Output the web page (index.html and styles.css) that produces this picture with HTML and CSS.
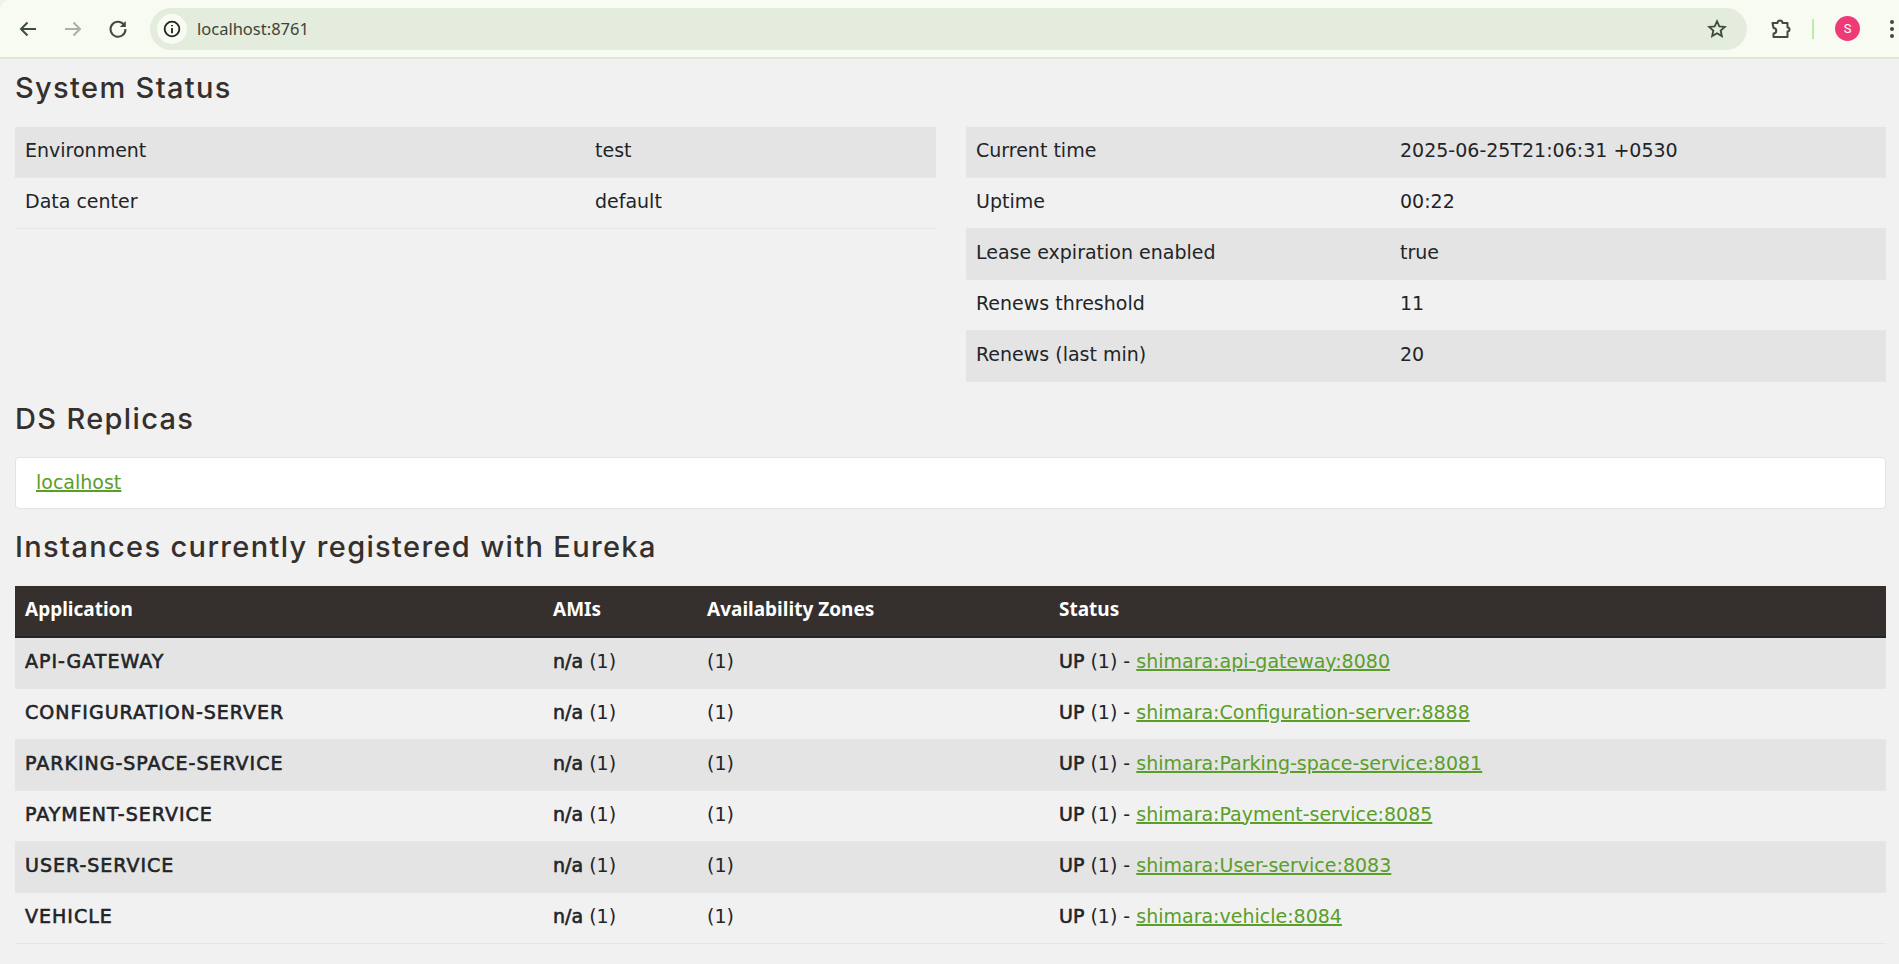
FILE: index.html
```html
<!DOCTYPE html>
<html lang="en">
<head>
<meta charset="utf-8">
<title>Eureka</title>
<link rel="stylesheet" href="styles.css">
</head>
<body>
<header class="toolbar">
  <svg class="ic nav-back" viewBox="0 0 24 24"><path d="M20 12H5M11.500 5.500 5 12l6.500 6.500"/></svg>
  <svg class="ic nav-fwd" viewBox="0 0 24 24"><path d="M4 12h15M12.500 5.500 19 12l-6.500 6.500"/></svg>
  <svg class="ic nav-reload" viewBox="0 0 24 24"><path d="M18.500 8.500A7.500 7.500 0 1 0 19.500 12"/><path class="solid" d="M19.800 4v6h-6z"/></svg>
  <div class="omnibox">
    <span class="site-chip"><svg class="info" viewBox="0 0 24 24"><circle cx="12" cy="12" r="8"/><path d="M12 11v5.500M12 7.500v1.500"/></svg></span>
    <span class="url">localhost:8761</span>
    <svg class="ic star" viewBox="0 0 24 24"><path d="m12 3.500 2.500 5.600 6 .6-4.500 4 1.300 6-5.300-3.100-5.300 3.100 1.300-6-4.500-4 6-.6z"/></svg>
  </div>
  <svg class="ic ext" viewBox="0 0 24 24"><path d="M4.500 6H9.500a2.500 2.500 0 0 1 5 0H19.500v4.500a2 2 0 0 1 0 4V20H5.500v-3.500a2.600 2.600 0 0 0 0-5.500z" stroke-linejoin="round"/></svg>
  <span class="divider"></span>
  <span class="avatar">S</span>
  <span class="dots"><i></i><i></i><i></i></span>
</header>

<main class="page">
  <h1 class="title title-sys">System Status</h1>
  <section class="status-grid">
    <table class="tbl tbl-left">
      <tr><td class="c-a">Environment</td><td>test</td></tr>
      <tr><td class="c-a">Data center</td><td>default</td></tr>
    </table>
    <table class="tbl tbl-right">
      <tr><td class="c-b">Current time</td><td>2025-06-25T21:06:31 +0530</td></tr>
      <tr><td class="c-b">Uptime</td><td>00:22</td></tr>
      <tr><td class="c-b">Lease expiration enabled</td><td>true</td></tr>
      <tr><td class="c-b">Renews threshold</td><td>11</td></tr>
      <tr><td class="c-b">Renews (last min)</td><td>20</td></tr>
    </table>
  </section>

  <h1 class="title title-ds">DS Replicas</h1>
  <div class="well"><a href="#">localhost</a></div>

  <h1 class="title title-inst">Instances currently registered with Eureka</h1>
  <table class="tbl tbl-inst">
    <thead>
      <tr><th class="i-app">Application</th><th class="i-ami">AMIs</th><th class="i-az">Availability Zones</th><th>Status</th></tr>
    </thead>
    <tbody>
      <tr><td><b class="app">API-GATEWAY</b></td><td><b>n/a</b> (1)</td><td>(1)</td><td><b>UP</b> (1) - <a href="#">shimara:api-gateway:8080</a></td></tr>
      <tr><td><b class="app">CONFIGURATION-SERVER</b></td><td><b>n/a</b> (1)</td><td>(1)</td><td><b>UP</b> (1) - <a href="#">shimara:Configuration-server:8888</a></td></tr>
      <tr><td><b class="app">PARKING-SPACE-SERVICE</b></td><td><b>n/a</b> (1)</td><td>(1)</td><td><b>UP</b> (1) - <a href="#">shimara:Parking-space-service:8081</a></td></tr>
      <tr><td><b class="app">PAYMENT-SERVICE</b></td><td><b>n/a</b> (1)</td><td>(1)</td><td><b>UP</b> (1) - <a href="#">shimara:Payment-service:8085</a></td></tr>
      <tr><td><b class="app">USER-SERVICE</b></td><td><b>n/a</b> (1)</td><td>(1)</td><td><b>UP</b> (1) - <a href="#">shimara:User-service:8083</a></td></tr>
      <tr><td><b class="app">VEHICLE</b></td><td><b>n/a</b> (1)</td><td>(1)</td><td><b>UP</b> (1) - <a href="#">shimara:vehicle:8084</a></td></tr>
    </tbody>
  </table>
</main>
</body>
</html>
```
FILE: styles.css
```css
* { box-sizing: border-box; }
html, body { margin: 0; height: 964px; overflow: hidden; }
body { background: #f1f1f1; color: #222428; font: 19px/24px "DejaVu Sans", sans-serif; }

.toolbar { height: 59px; background: #f8fbf2; border-bottom: 2px solid #e2e5d9; border-radius: 10px 0 0 0; display: flex; align-items: center; padding: 0 5px 0 16px; }
.ic { fill: none; stroke: #3f4b3c; stroke-width: 2; width: 24px; height: 24px; flex: none; }
.ic .solid { fill: #3f4b3c; stroke: none; }
.nav-fwd { stroke: #a9b0a5; margin-left: 21px; }
.nav-reload { margin-left: 21px; }
.omnibox { flex: 1; height: 42px; margin-left: 20px; background: #e4ecdd; border-radius: 21px; display: flex; align-items: center; padding: 0 19px 0 7px; }
.site-chip { width: 30px; height: 30px; border-radius: 50%; background: #f8fbf2; display: flex; align-items: center; justify-content: center; }
.info { width: 22px; height: 22px; fill: none; stroke: #222; stroke-width: 2; }
.url { font: 16.500px/24px "Noto Sans", sans-serif; color: #3d4439; margin-left: 10px; flex: 1; }
.star { width: 22px; height: 22px; }
.ext { margin-left: 21px; }
.divider { width: 2px; height: 20px; background: #bdeaa9; margin-left: 20px; }
.avatar { width: 25px; height: 25px; border-radius: 50%; background: #ee3b78; color: #fff; font: 13px/25px "Roboto", sans-serif; text-align: center; margin-left: 21px; }
.dots { display: flex; flex-direction: column; gap: 3px; margin-left: 30px; }
.dots i { width: 4px; height: 4px; border-radius: 50%; background: #3f4b3c; display: block; }

.page { padding: 0 13px 0 15px; }
.title { margin: 0; font: 500 29px/36px "Inter", sans-serif; letter-spacing: 1.350px; color: #35302d; }
.title-sys { margin-top: 11px; }
.title-ds { margin-top: 19px; }
.title-inst { margin-top: 20px; }

.status-grid { display: flex; justify-content: space-between; align-items: flex-start; margin-top: 21px; }
.tbl { border-collapse: separate; border-spacing: 0; table-layout: fixed; }
.tbl td, .tbl th { height: 51px; padding: 0 10px 5px; text-align: left; border-bottom: 1px solid #e4e6e8; }
.tbl tr:nth-child(odd) td { background: #e4e4e4; }
.tbl-left { width: 921px; }
.tbl-right { width: 920px; }
.c-a { width: 570px; }
.c-b { width: 424px; }

.well { height: 52px; margin-top: 20px; padding: 0 20px 3px; background: #fff; border: 1px solid #e3e3e3; border-radius: 4px; display: flex; align-items: center; }
a { color: #5a9e2a; text-decoration: underline; text-decoration-thickness: 1.500px; }

.tbl-inst { width: 100%; margin-top: 21px; }
.tbl-inst th { background: #35302d; color: #fff; font: 700 19px/24px "Noto Sans", sans-serif; height: 52px; border-bottom: 2px solid #23242a; padding-bottom: 4px; }
.tbl-inst tbody tr:nth-child(odd) td { background: #e4e4e4; }
.tbl-inst b { font-weight: 400; -webkit-text-stroke: .6px #222428; }
.tbl-inst .app { letter-spacing: 1px; }
.i-app { width: 528px; }
.i-ami { width: 154px; }
.i-az { width: 352px; }
```
